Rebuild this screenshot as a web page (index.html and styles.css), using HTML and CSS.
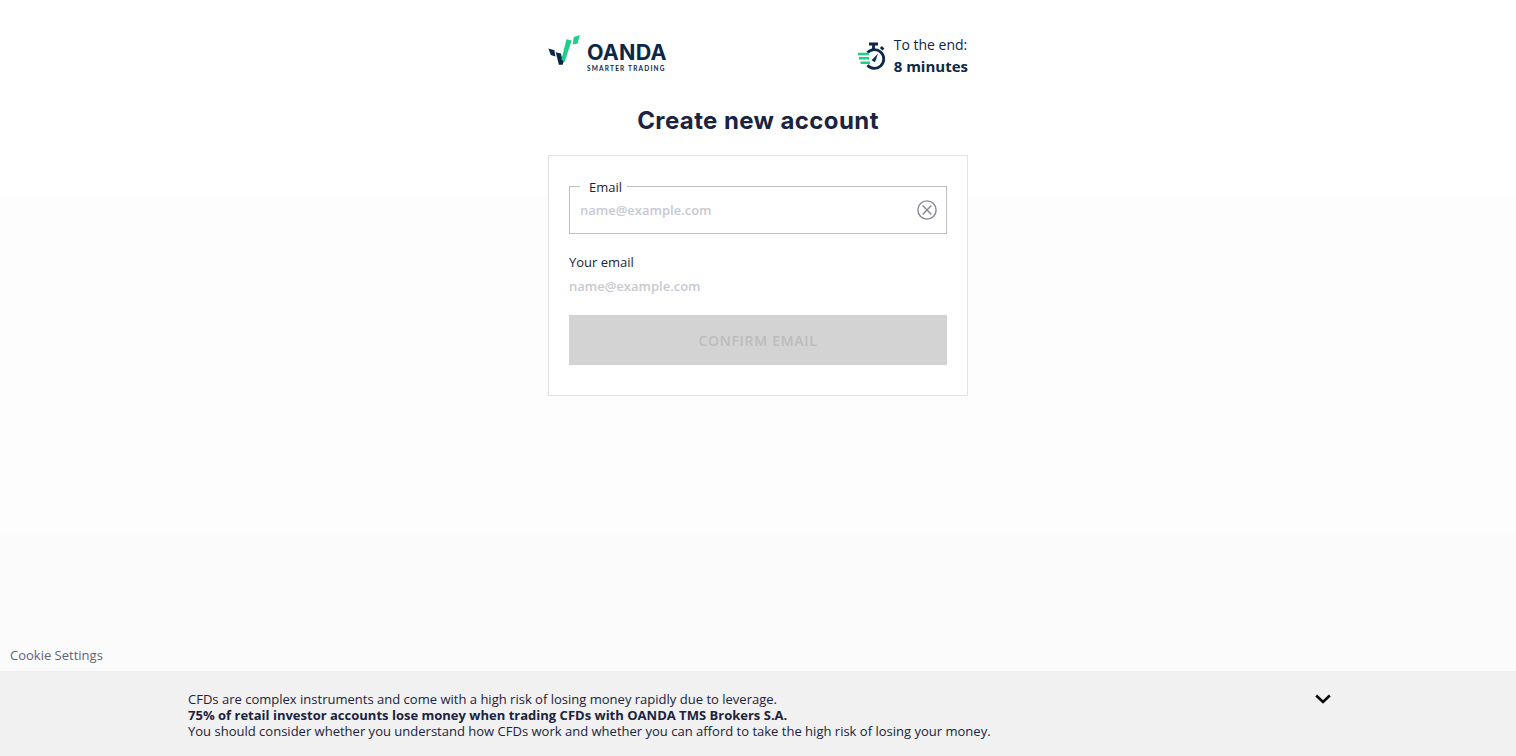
FILE: index.html
```html
<!DOCTYPE html>
<html lang="en">
<head>
<meta charset="utf-8">
<title>Create new account</title>
<link rel="stylesheet" href="styles.css">
</head>
<body>
<main class="column">
  <header class="top">
    <div class="logo">
      <svg class="logo-mark" width="34" height="32" viewBox="0 0 34 32">
        <path d="M0.4 13.6 L6.4 15.2 L7.4 21.4 L2.8 20 Z" fill="#0d2748"/>
        <path d="M7.8 17.2 L13 18.6 L14.8 29.6 L10.8 29.6 Z" fill="#0d2748"/>
        <path d="M10.8 29.6 L14.8 29.6 L17.6 20 L13.2 22 Z" fill="#0d2748"/>
        <path d="M13.4 24.6 L18.5 4.2 L23.6 5.6 L16.6 27 Z" fill="#1cd08a"/>
        <path d="M25.8 2 L31.8 0 L29.6 8.6 L24.8 9.6 Z" fill="#1cd08a"/>
      </svg>
      <div class="logo-text">
        <span class="logo-name">OANDA</span>
        <span class="logo-tag">SMARTER TRADING</span>
      </div>
    </div>
    <div class="timer">
      <svg class="timer-icon" width="29" height="30" viewBox="0 0 29 30" fill="none">
        <path d="M12 3 H21 M16.5 3 V8.5" stroke="#0d2748" stroke-width="2.8"/>
        <path d="M23.8 6 L26.4 8.6" stroke="#0d2748" stroke-width="2.8"/>
        <path d="M10.5 11.8 A9.3 9.3 0 1 1 10.5 24.2" stroke="#0d2748" stroke-width="2.8"/>
        <path d="M14.6 19.2 L21 12.6 L18 21.2 Z" fill="#0d2748"/>
        <path d="M1 13 H12 M2 17.3 H12 M3.5 21.7 H13" stroke="#1cd08a" stroke-width="2.4"/>
      </svg>
      <div class="timer-text">
        <span>To the end:</span>
        <strong>8 minutes</strong>
      </div>
    </div>
  </header>
  <h1 class="title">Create new account</h1>
  <form class="card">
    <fieldset class="field">
      <legend class="field-label">Email</legend>
      <input class="field-input" type="text" placeholder="name@example.com">
      <svg class="clear" width="20" height="20" viewBox="0 0 20 20" fill="none" stroke="#858895" stroke-width="1.4">
        <circle cx="10" cy="10" r="9.1"/>
        <path d="M5.6 5.6 L14.4 14.4 M14.4 5.6 L5.6 14.4"/>
      </svg>
    </fieldset>
    <p class="echo-label">Your email</p>
    <p class="echo-value">name@example.com</p>
    <button class="confirm" type="button" disabled>CONFIRM EMAIL</button>
  </form>
</main>
<div class="bottom">
  <a class="cookie">Cookie Settings</a>
  <aside class="risk">
    <p class="risk-text">CFDs are complex instruments and come with a high risk of losing money rapidly due to leverage.<br>
    <strong>75% of retail investor accounts lose money when trading CFDs with OANDA TMS Brokers S.A.</strong><br>
    You should consider whether you understand how CFDs work and whether you can afford to take the high risk of losing your money.</p>
    <svg class="chevron" width="16" height="10" viewBox="0 0 16 10" fill="none" stroke="#0a0a0a" stroke-width="2.6">
      <path d="M1.2 1.5 L8 8 L14.8 1.5"/>
    </svg>
  </aside>
</div>
</body>
</html>
```
FILE: styles.css
```css
* { box-sizing: border-box; }
html, body { height: 100%; }
body {
  margin: 0;
  display: flex;
  flex-direction: column;
  min-height: 756px;
  overflow: hidden;
  font-family: "Open Sans", "Liberation Sans", sans-serif;
  color: #1a2340;
  background: linear-gradient(#ffffff 195px, #fdfdfd 195px, #fdfdfd 535px, #fbfbfb 535px);
}
.column { width: 420px; margin: 0 auto; flex: 1; }
.top {
  display: flex;
  justify-content: space-between;
  align-items: flex-start;
  padding-top: 35px;
  height: 90px;
}
.logo { display: flex; align-items: flex-start; }
.logo-mark { display: block; }
.logo-text { display: flex; flex-direction: column; margin: 6px 0 0 5px; }
.logo-name {
  font-family: Inter, "Liberation Sans", sans-serif;
  font-weight: 700;
  font-size: 21.5px;
  line-height: 23px;
  letter-spacing: 0.2px;
  color: #0d2748;
}
.logo-tag {
  font-family: Lato, "Liberation Sans", sans-serif;
  font-weight: 700;
  font-size: 6.5px;
  line-height: 8px;
  letter-spacing: 1.2px;
  margin-top: 1px;
  color: #0d2748;
}
.timer { display: flex; align-items: flex-start; gap: 8px; }
.timer-icon { display: block; margin-top: 6px; }
.timer-text {
  display: flex;
  flex-direction: column;
  font-size: 14px;
  line-height: 21px;
  color: #0d2748;
  margin-top: -1px;
}
.timer-text strong { margin-top: 1px; font-size: 15px; font-weight: 700; }
.title {
  margin: 0;
  font-family: Inter, "Liberation Sans", sans-serif;
  font-weight: 700;
  font-size: 24px;
  line-height: 32px;
  letter-spacing: 0.4px;
  height: 65px;
  padding-top: 15px;
  text-align: center;
  color: #1a2340;
}
.card {
  border: 1px solid #e2e2e4;
  background: #fff;
  height: 241px;
  padding: 20px 20px 0;
}
.field {
  position: relative;
  margin: 0;
  padding: 0 10px;
  height: 58px;
  border: 1px solid #bfc0c6;
  background: #fff;
}
.field-label {
  padding: 1px 5px 0 9px;
  font-size: 13px;
  line-height: 20px;
  color: #1a2340;
}
.field-input {
  display: block;
  width: 320px;
  height: 24px;
  padding: 0;
  margin-top: 1px;
  border: 0;
  outline: 0;
  background: transparent;
  font: 600 13px/24px "Open Sans", sans-serif;
}
.field-input::placeholder { color: #c8c9d0; opacity: 1; }
.clear { position: absolute; right: 9px; top: 3px; }
.echo-label {
  margin: 19px 0 0;
  font-size: 13px;
  line-height: 18px;
  color: #1a2340;
}
.echo-value {
  margin: 6px 0 0;
  font-size: 13px;
  font-weight: 600;
  line-height: 18px;
  color: #c8c9d0;
}
.confirm {
  display: block;
  width: 100%;
  height: 50px;
  margin-top: 20px;
  border: 0;
  background: #d3d3d3;
  color: #bcbcbc;
  font: 600 14px "Open Sans", sans-serif;
  letter-spacing: 0.7px;
}
.bottom { flex: none; }
.cookie {
  display: block;
  padding: 8px 10px 0;
  height: 33px;
  font-size: 13px;
  line-height: 18px;
  color: #5f6377;
}
.risk {
  display: flex;
  align-items: flex-start;
  height: 85px;
  padding: 20px 0 0 188px;
  background: #f1f1f1;
}
.risk-text {
  width: 1127px;
  margin: 0;
  font-size: 13.02px;
  line-height: 16px;
  color: #1a2340;
}
.chevron { display: block; margin-top: 3px; }
```
